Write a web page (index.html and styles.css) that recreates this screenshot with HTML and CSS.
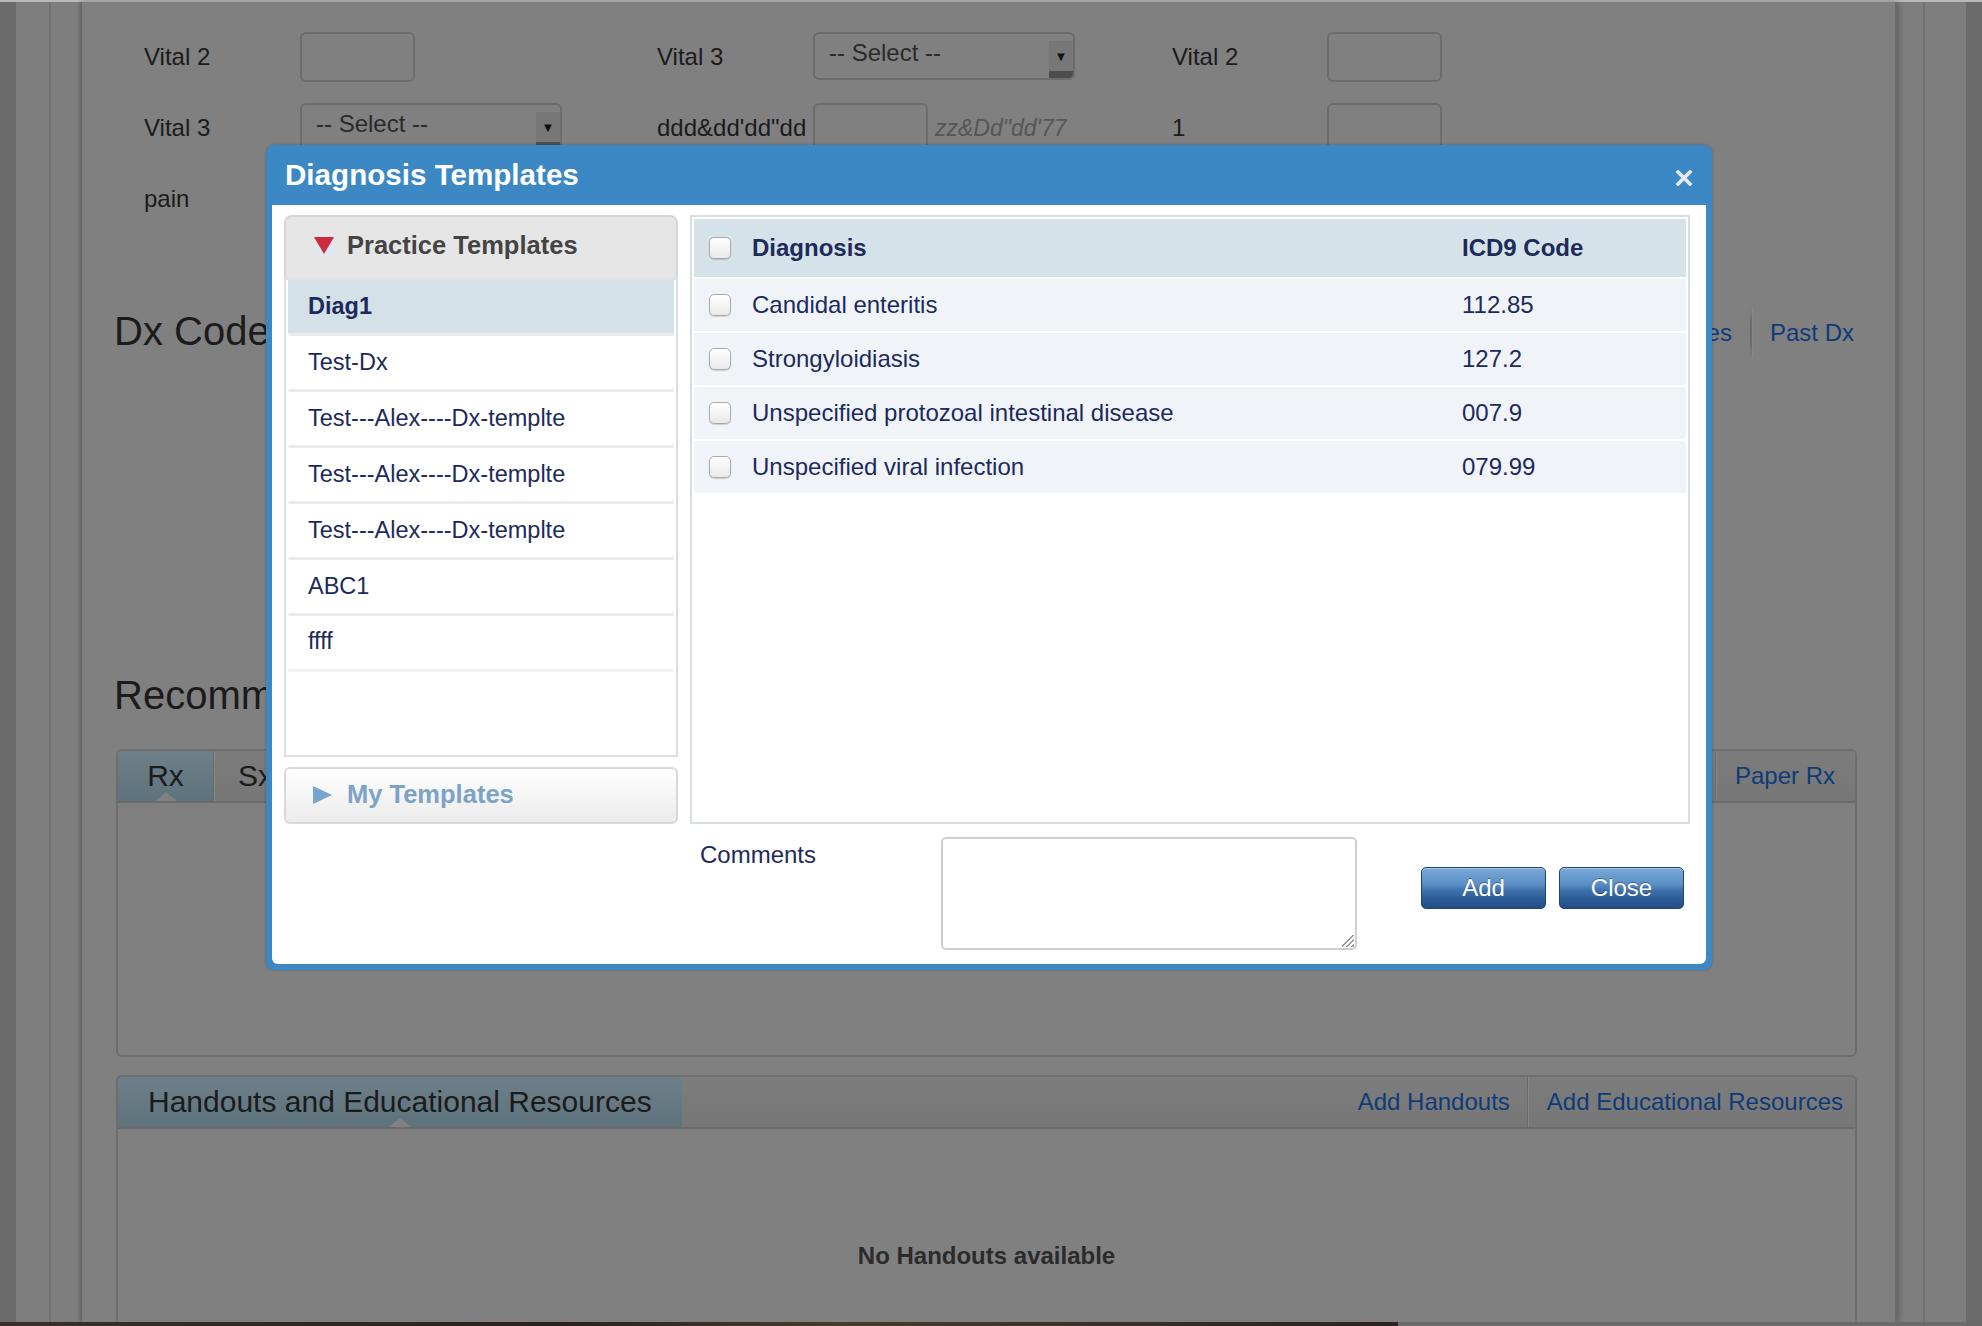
FILE: index.html
```html
<!DOCTYPE html>
<html lang="en">
<head>
<meta charset="utf-8">
<title>Diagnosis Templates</title>
<link rel="stylesheet" href="styles.css">
</head>
<body>
<div class="topline"></div>
<div class="shell">
  <div class="frame">
    <div class="page">
      <div class="vitals">
        <div class="v-label">Vital 2</div>
        <div class="v-cell"><div class="field-input"></div></div>
        <div class="v-label">Vital 3</div>
        <div class="v-cell"><div class="field-select"><span class="sel-text">-- Select --</span><span class="sel-btn">&#9660;</span></div></div>
        <div class="v-label">Vital 2</div>
        <div class="v-cell"><div class="field-input"></div></div>

        <div class="v-label">Vital 3</div>
        <div class="v-cell"><div class="field-select"><span class="sel-text">-- Select --</span><span class="sel-btn">&#9660;</span></div></div>
        <div class="v-label">ddd&amp;dd'dd"dd</div>
        <div class="v-cell"><div class="field-input"></div><span class="hint">zz&amp;Dd"dd'77</span></div>
        <div class="v-label">1</div>
        <div class="v-cell"><div class="field-input"></div></div>

        <div class="v-label">pain</div>
      </div>

      <div class="sec-head">
        <h2 class="sec-title">Dx Code</h2>
        <div class="links">
          <a class="plink">Favorites</a><span class="vsep"></span><a class="plink">Past Dx</a>
        </div>
      </div>
      <div class="dx-body"></div>

      <h2 class="sec-title rec-title">Recommendations</h2>
      <div class="tabbox rec">
        <div class="tabstrip">
          <div class="tab active rx">Rx</div>
          <div class="tab sx">Sx</div>
          <div class="strip-space"></div>
          <a class="strip-link sep-left tall">Paper Rx</a>
        </div>
        <div class="tabbody"></div>
      </div>

      <div class="tabbox handouts">
        <div class="tabstrip">
          <div class="tab active ho">Handouts and Educational Resources</div>
          <div class="strip-space"></div>
          <a class="strip-link">Add Handouts</a>
          <a class="strip-link sep-left last">Add Educational Resources</a>
        </div>
        <div class="tabbody empty-msg">No Handouts available</div>
      </div>
    </div>
  </div>
</div>
<div class="dock"><div class="dock-img"></div><div class="dock-rest"></div></div>

<div class="modal">
  <div class="modal-head">
    <h1 class="modal-title">Diagnosis Templates</h1>
    <span class="modal-close">
      <svg width="16" height="16" viewBox="0 0 16 16"><path d="M2 2 L14 14 M14 2 L2 14" stroke="#e4ecf4" stroke-width="3.6" stroke-linecap="square"/></svg>
    </span>
  </div>
  <div class="modal-body">
    <div class="left-col">
      <div class="acc-head open">
        <svg class="acc-icon" width="20" height="17" viewBox="0 0 20 17"><rect x="0" y="9" width="20" height="8" fill="#dce8f2"/><polygon points="0,0 20,0 10,17" fill="#cc2a3f"/></svg>
        <span class="acc-title">Practice Templates</span>
      </div>
      <ul class="tpl-list">
        <li class="sel">Diag1</li>
        <li>Test-Dx</li>
        <li>Test---Alex----Dx-templte</li>
        <li>Test---Alex----Dx-templte</li>
        <li>Test---Alex----Dx-templte</li>
        <li>ABC1</li>
        <li class="last">ffff</li>
      </ul>
      <div class="acc-head closed">
        <svg class="acc-icon" width="19" height="18" viewBox="0 0 19 18"><polygon points="0,0 19,9 0,18" fill="#78a5cf"/></svg>
        <span class="acc-title">My Templates</span>
      </div>
    </div>
    <div class="right-col">
      <div class="grid-panel">
        <table class="dx-table">
          <thead>
            <tr><th class="c1"><span class="cb"></span>Diagnosis</th><th class="c2">ICD9 Code</th></tr>
          </thead>
          <tbody>
            <tr><td class="c1"><span class="cb"></span>Candidal enteritis</td><td class="c2">112.85</td></tr>
            <tr><td class="c1"><span class="cb"></span>Strongyloidiasis</td><td class="c2">127.2</td></tr>
            <tr><td class="c1"><span class="cb"></span>Unspecified protozoal intestinal disease</td><td class="c2">007.9</td></tr>
            <tr><td class="c1"><span class="cb"></span>Unspecified viral infection</td><td class="c2">079.99</td></tr>
          </tbody>
        </table>
      </div>
      <div class="footer">
        <label class="cm-label">Comments</label>
        <div class="cm-box"><span class="grip"></span></div>
        <div class="btns">
          <button class="btn">Add</button>
          <button class="btn">Close</button>
        </div>
      </div>
    </div>
  </div>
</div>
</body>
</html>
```

FILE: styles.css
```css
* { box-sizing: border-box; }

html, body {
  margin: 0;
  padding: 0;
}

body {
  width: 1982px;
  height: 1326px;
  overflow: hidden;
  background: #6b6b6b;
  font-family: "Liberation Sans", Arial, Helvetica, sans-serif;
  color: #1b1b1b;
  display: flex;
  flex-direction: column;
  position: relative;
}

.topline {
  height: 2px;
  background: #b9b9b9;
  flex: 0 0 2px;
}

.shell {
  flex: 1;
  margin: 0 16px;
  background: #7e7e7e;
  display: flex;
  padding: 0 41px 0 33px;
  min-height: 0;
}

.frame {
  flex: 1;
  display: flex;
  border-left: 2px solid #717171;
  border-right: 2px solid #717171;
  background: #7e7e7e;
  padding: 0 26px 0 30px;
  min-height: 0;
}

.page {
  flex: 1;
  background: #808080;
  border-left: 1px solid #676767;
  border-right: 2px solid #6a6a6a;
  box-shadow: -2px 0 4px rgba(0,0,0,0.18), 3px 0 5px rgba(0,0,0,0.18);
  padding: 30px 38px 0 32px;
  overflow: hidden;
  min-height: 0;
}

/* vitals */
.vitals {
  margin-left: 30px;
  display: grid;
  grid-template-columns: 156px 357px 156px 359px 155px 200px;
  grid-auto-rows: 50px;
  row-gap: 21px;
}
.v-label {
  font-size: 24px;
  display: flex;
  align-items: center;
  color: #1b1b1b;
}
.v-cell {
  display: flex;
  align-items: flex-start;
}
.field-input {
  width: 115px;
  height: 50px;
  border: 2px solid #6c6c6c;
  border-radius: 6px;
}
.field-select {
  width: 262px;
  height: 48px;
  border: 2px solid #6c6c6c;
  border-radius: 6px;
  display: flex;
  align-items: stretch;
  overflow: hidden;
}
.sel-text {
  flex: 1;
  font-size: 24px;
  color: #2a2a2a;
  padding: 5px 0 0 14px;
}
.sel-btn {
  width: 24px;
  margin-top: 7px;
  background: #777;
  border-bottom: 7px solid #4d4d4d;
  border-radius: 0 0 4px 0;
  font-size: 13px;
  color: #111;
  display: flex;
  align-items: center;
  justify-content: center;
}
.hint {
  font-size: 23px;
  font-style: italic;
  color: #565656;
  margin: 12px 0 0 7px;
  white-space: nowrap;
}

/* sections */
.sec-head {
  margin-top: 83px;
  height: 48px;
  display: flex;
  align-items: center;
  justify-content: space-between;
}
.sec-title {
  margin: 0;
  font-size: 40px;
  line-height: 48px;
  font-weight: normal;
  color: #1b1b1b;
  white-space: nowrap;
}
.links {
  display: flex;
  align-items: center;
  padding-right: 3px;
  margin-top: 3px;
}
.plink {
  font-size: 24px;
  color: #0e3b78;
}
.vsep {
  width: 2px;
  height: 50px;
  margin: 0 18px;
  background: linear-gradient(rgba(100,100,100,0), #6a6a6a 30%, #6a6a6a 70%, rgba(100,100,100,0));
  box-shadow: 1px 0 0 rgba(140,140,140,0.6);
}
.dx-body { height: 316px; }
.rec-title { margin-bottom: 30px; }

/* tab boxes */
.tabbox {
  margin-left: 2px;
  border: 2px solid #6d6d6d;
  border-radius: 6px;
  display: flex;
  flex-direction: column;
  background: #808080;
}
.rec { height: 308px; }
.handouts { margin-top: 18px; height: 320px; }

.tabstrip {
  height: 52px;
  flex: 0 0 52px;
  display: flex;
  align-items: stretch;
  background: linear-gradient(#7c7c7c, #777777);
  border-bottom: 2px solid #6a6a6a;
  border-radius: 4px 4px 0 0;
}
.tab {
  position: relative;
  display: flex;
  align-items: center;
  font-size: 30px;
  color: #1b1b1b;
  white-space: nowrap;
}
.tab.active {
  background: linear-gradient(#6e7f88, #5e737e);
  border-radius: 4px 0 0 0;
}
.tab.active::after {
  content: "";
  position: absolute;
  left: 50%;
  bottom: 0;
  margin-left: -11px;
  border-left: 11px solid transparent;
  border-right: 11px solid transparent;
  border-bottom: 9px solid #808080;
}
.rx { width: 95px; justify-content: center; }
.sx {
  padding-left: 24px;
  border-left: 1px solid #6a6a6a;
  box-shadow: inset 1px 0 0 #868686;
}
.ho { width: 564px; padding-left: 30px; }
.strip-space { flex: 1; }
.strip-link {
  display: flex;
  align-items: center;
  font-size: 24px;
  color: #0e3b78;
  padding: 0 17px;
  white-space: nowrap;
}
.sep-left {
  border-left: 1px solid #6a6a6a;
  box-shadow: inset 1px 0 0 #878787;
  padding-left: 19px;
}
.tall { padding-right: 20px; }
.last { padding-right: 12px; }
.tabbody { flex: 1; }
.empty-msg {
  text-align: center;
  padding-top: 113px;
  font-size: 24px;
  font-weight: bold;
  color: #2b2b2b;
}

.dock {
  flex: 0 0 4px;
  display: flex;
}
.dock-img {
  width: 1398px;
  background: linear-gradient(90deg, #3b2f25, #2a221d 40%, #4a3a2a 60%, #2b2320);
}
.dock-rest { flex: 1; background: #6a6a6a; }

/* modal */
.modal {
  position: absolute;
  left: 266px;
  top: 145px;
  width: 1446px;
  height: 825px;
  background: #3c88c5;
  border-radius: 8px;
  padding: 0 6px 6px 6px;
  display: flex;
  flex-direction: column;
  box-shadow: 0 0 3px rgba(0,0,0,0.25);
}
.modal-head {
  height: 60px;
  flex: 0 0 60px;
  display: flex;
  align-items: center;
  justify-content: space-between;
  padding: 0 14px 0 13px;
}
.modal-title {
  margin: 0;
  font-size: 29.6px;
  font-weight: bold;
  color: #ffffff;
}
.modal-close {
  width: 16px;
  height: 16px;
  display: flex;
  margin-top: 6px;
}
.modal-body {
  flex: 1;
  background: #ffffff;
  border-radius: 0 0 6px 6px;
  display: flex;
  gap: 12px;
  padding: 10px 16px 0 12px;
}

.left-col {
  width: 394px;
  flex: 0 0 394px;
  display: flex;
  flex-direction: column;
}
.acc-head {
  display: flex;
  align-items: center;
  gap: 13px;
}
.acc-head.open {
  height: 62px;
  background: #e6e6e6;
  border: 2px solid #d6d6d6;
  border-bottom: none;
  border-radius: 8px 8px 0 0;
  padding-left: 28px;
  padding-bottom: 4px;
}
.acc-head.closed {
  margin-top: 10px;
  height: 57px;
  border: 2px solid #d9d9d9;
  border-radius: 6px;
  background: linear-gradient(#ffffff, #ebebeb);
  padding-left: 27px;
  gap: 15px;
  padding-bottom: 2px;
}
.acc-icon { flex: 0 0 auto; }
.acc-title {
  font-size: 25.5px;
  font-weight: bold;
  color: #444444;
}
.closed .acc-title { color: #7ca3c6; }

.tpl-list {
  margin: 0;
  list-style: none;
  height: 480px;
  border: 2px solid #d8dfe4;
  border-top: 3px solid #dfe3e6;
  padding: 0 2px;
}
.tpl-list li {
  height: 56px;
  line-height: 53px;
  padding-left: 20px;
  font-size: 23.5px;
  color: #1d2a5c;
  border-bottom: 3px solid #ebebeb;
  border-radius: 0 0 2px 2px;
}
.tpl-list li.sel {
  background: #d5e1e8;
  font-weight: bold;
}
.tpl-list li.last { border-bottom-color: #f1f1f1; line-height: 50px; }

.right-col {
  width: 1000px;
  flex: 0 0 1000px;
  display: flex;
  flex-direction: column;
}
.grid-panel {
  height: 609px;
  border: 2px solid #d8dfe4;
  padding: 0 2px;
}
.dx-table {
  width: 100%;
  border-collapse: separate;
  border-spacing: 0 2px;
  color: #1d2a5c;
  font-size: 24px;
}
.dx-table th {
  height: 58px;
  background: #d6e2e9;
  text-align: left;
  font-weight: bold;
}
.dx-table td {
  height: 52px;
  background: #f0f4f9;
}
.c1 {
  padding-left: 15px;
}
.c1 .cb { margin-right: 21px; }
.c2 {
  width: 238px;
  padding-left: 14px;
}
.cb {
  display: inline-block;
  vertical-align: middle;
  width: 22px;
  height: 22px;
  border: 1px solid #a9a9a9;
  border-radius: 5px;
  background: linear-gradient(#ffffff, #e9e9e9);
  box-shadow: 0 1px 1px rgba(0,0,0,0.15);
  position: relative;
  top: -2px;
}

.footer {
  flex: 1;
  display: flex;
  align-items: flex-start;
  padding: 13px 6px 0 10px;
}
.cm-label {
  flex: 0 0 241px;
  font-size: 24px;
  line-height: 28px;
  margin-top: 4px;
  color: #1d2a5c;
}
.cm-box {
  width: 416px;
  height: 113px;
  border: 2px solid #cfcfcf;
  border-radius: 5px;
  position: relative;
}
.grip {
  position: absolute;
  right: 1px;
  bottom: 1px;
  width: 12px;
  height: 12px;
  background: linear-gradient(135deg, transparent 45%, #9a9a9a 45%, #9a9a9a 52%, transparent 52%, transparent 66%, #9a9a9a 66%, #9a9a9a 73%, transparent 73%, transparent 86%, #9a9a9a 86%);
}
.btns {
  margin-left: auto;
  margin-top: 30px;
  display: flex;
  gap: 13px;
}
.btn {
  width: 125px;
  height: 42px;
  border: 1px solid #1d4472;
  border-radius: 5px;
  background: linear-gradient(#79a9d8 0%, #5b8fc5 40%, #3f73ad 55%, #2d5e98 75%, #234e87 100%);
  color: #ffffff;
  font-family: "Liberation Sans", Arial, sans-serif;
  font-size: 24px;
  text-shadow: 0 -1px 0 rgba(0,0,0,0.35);
  padding: 0;
  box-shadow: inset 0 1px 0 rgba(255,255,255,0.35);
}
```
